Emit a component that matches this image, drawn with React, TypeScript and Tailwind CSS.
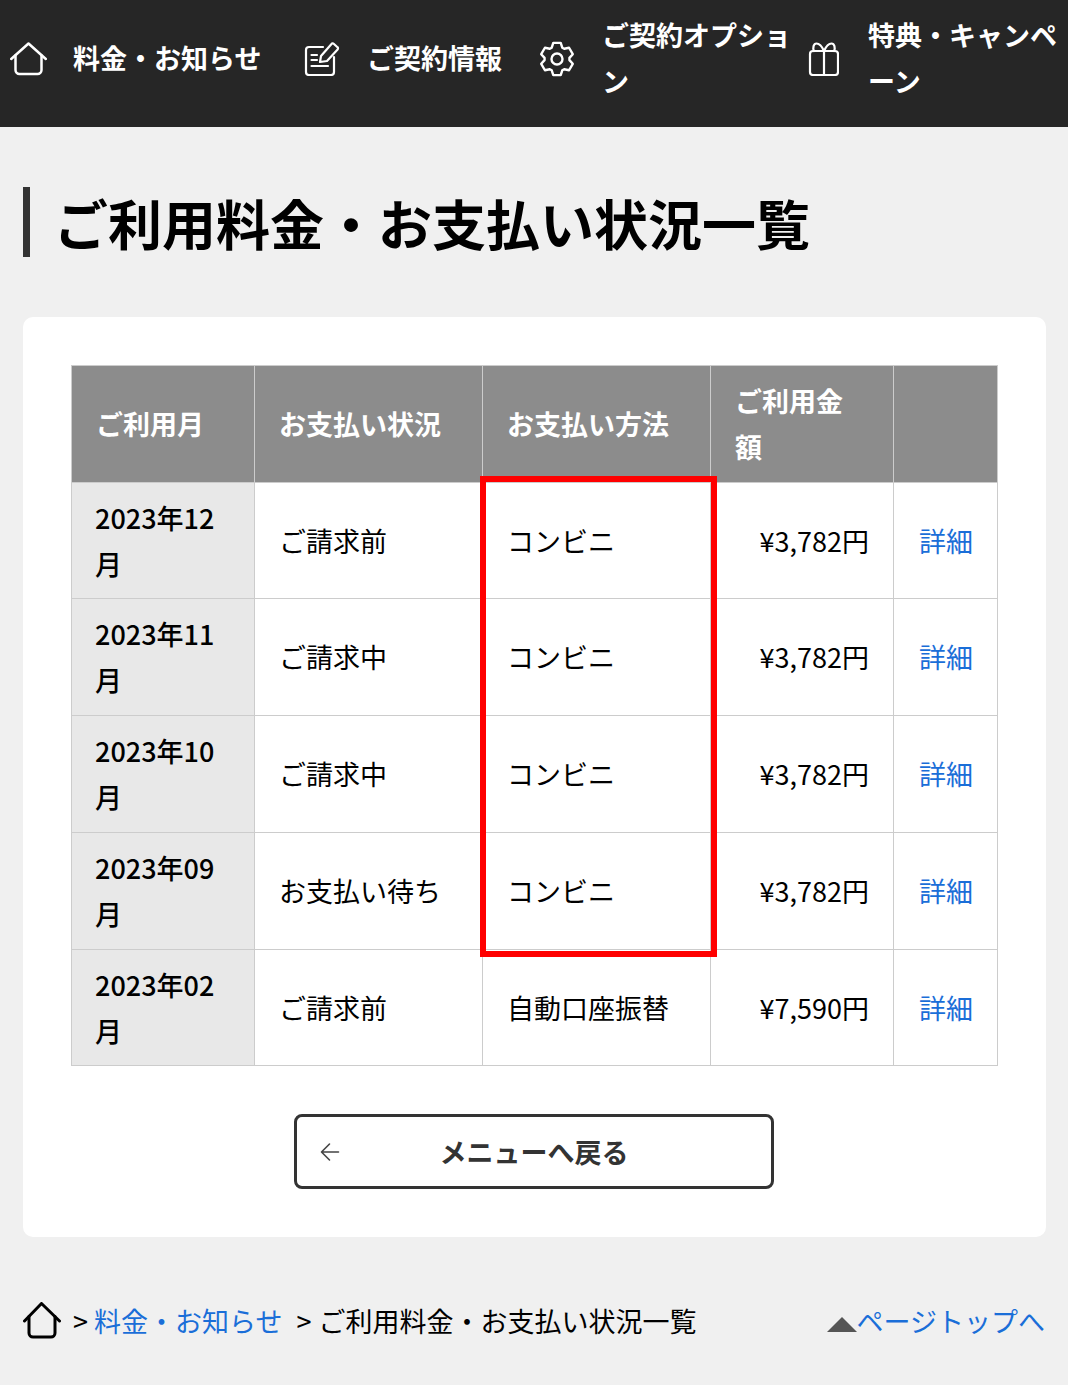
const font = { fontFamily: '"Noto Sans CJK JP", "Noto Sans", sans-serif' };

const rows = [
  ["2023年12月", "ご請求前", "コンビニ", "¥3,782円", "h-[116px]"],
  ["2023年11月", "ご請求中", "コンビニ", "¥3,782円", "h-[117px]"],
  ["2023年10月", "ご請求中", "コンビニ", "¥3,782円", "h-[117px]"],
  ["2023年09月", "お支払い待ち", "コンビニ", "¥3,782円", "h-[117px]"],
  ["2023年02月", "ご請求前", "自動口座振替", "¥7,590円", "h-[116px]"],
];

function HomeIcon() {
  return (
    <svg viewBox="0 0 37 34" className="w-[37px] h-[34px] shrink-0" fill="none" stroke="white" strokeWidth="2.5" strokeLinecap="round" strokeLinejoin="round">
      <path d="M1.200 17 18.500 1.500 35.800 17" />
      <path d="M5.500 13.500V28a4 4 0 0 0 4 4h18a4 4 0 0 0 4-4V13.500" />
    </svg>
  );
}

function EditIcon() {
  return (
    <svg viewBox="0 0 36 34" className="w-[36px] h-[34px] shrink-0" fill="none" stroke="white" strokeWidth="2.200" strokeLinecap="round" strokeLinejoin="round">
      <path d="M19 5H5a3 3 0 0 0-3 3v22a3 3 0 0 0 3 3h22a3 3 0 0 0 3-3V15" />
      <path d="M7.500 13H13M7.500 18H13M7.500 24H24" />
      <path d="M16 20l1-6L27.500 2a1.500 1.500 0 0 1 2.200-.2l3.800 3.400a1.500 1.500 0 0 1 .1 2.200L23 19z" />
    </svg>
  );
}

function GearIcon() {
  const pts: string[] = [];
  for (let i = 0; i < 6; i++) {
    const a = i * 60 - 90;
    [
      [a - 25, 12.5],
      [a - 13, 16.5],
      [a + 13, 16.5],
      [a + 25, 12.5],
    ].forEach(([d, r]) => {
      const t = (d * Math.PI) / 180;
      pts.push(`${(18 + r * Math.cos(t)).toFixed(2)},${(18 + r * Math.sin(t)).toFixed(2)}`);
    });
  }
  return (
    <svg viewBox="0 0 36 36" className="w-[36px] h-[36px] shrink-0" fill="none" stroke="white" strokeWidth="2.400" strokeLinecap="round" strokeLinejoin="round">
      <polygon points={pts.join(" ")} />
      <circle cx="18" cy="18" r="5.500" />
    </svg>
  );
}

function GiftIcon() {
  return (
    <svg viewBox="0 0 31 34" className="w-[31px] h-[34px] shrink-0" fill="none" stroke="white" strokeWidth="2.200" strokeLinecap="round" strokeLinejoin="round">
      <rect x="2" y="9" width="28" height="24" rx="3" />
      <path d="M16 9v24" />
      <path d="M16 9C14 4.500 11 1.500 8.500 1.500 5.500 1.500 4.500 6 6 9" />
      <path d="M16 9c2-4.500 5-7.500 7.500-7.500 3 0 4 4.500 2.500 7.500" />
    </svg>
  );
}

function NavText({ className, children }: { className: string; children: string }) {
  return <span className={`text-[27px] font-bold leading-[46px] text-white -mt-[2px] ${className}`}>{children}</span>;
}

export default function App() {
  return (
    <div style={font} className="w-[1068px] h-[1385px] bg-[#f0f0f0] text-black overflow-hidden">
      <nav className="h-[127px] bg-[#262626] flex items-center pl-[10px] pb-[10px]">
        <HomeIcon />
        <NavText className="ml-[26px] w-[190px] shrink-0">料金・お知らせ</NavText>
        <span className="ml-[41px]"><EditIcon /></span>
        <NavText className="ml-[27px] w-[136px] shrink-0">ご契約情報</NavText>
        <span className="ml-[36px]"><GearIcon /></span>
        <NavText className="ml-[27px] w-[190px] shrink-0">ご契約オプション</NavText>
        <span className="ml-[16px]"><GiftIcon /></span>
        <NavText className="ml-[29px] w-[195px] shrink-0">特典・キャンペーン</NavText>
      </nav>

      <div className="px-[23px]">
        <h1 className="mt-[60px] h-[70px] border-l-[7px] border-[#333] pl-[24px] text-[54px] leading-[72px] font-bold whitespace-nowrap">
          ご利用料金・お支払い状況一覧
        </h1>

        <main className="mt-[60px] h-[920px] w-[1023px] bg-white rounded-[10px] px-[48px] pt-[48px]">
          <div className="relative">
            <table className="w-[926px] table-fixed border-collapse text-[27px] leading-[46px]">
              <colgroup>
                <col className="w-[183px]" />
                <col className="w-[228px]" />
                <col className="w-[228px]" />
                <col className="w-[183px]" />
                <col className="w-[104px]" />
              </colgroup>
              <thead>
                <tr className="h-[117px] bg-[#8c8c8c] text-white font-bold text-left">
                  {["ご利用月", "お支払い状況", "お支払い方法", "ご利用金額", ""].map((h, i) => (
                    <th key={i} className="border border-[#cccccc] px-[24px] font-bold">{h}</th>
                  ))}
                </tr>
              </thead>
              <tbody>
                {rows.map((r) => (
                  <tr key={r[0]} className={r[4]}>
                    <td className="border border-[#cccccc] bg-[#e8e8e8] px-[23px] font-medium">{r[0]}</td>
                    <td className="border border-[#cccccc] px-[24px]">{r[1]}</td>
                    <td className="border border-[#cccccc] px-[24px]">{r[2]}</td>
                    <td className="border border-[#cccccc] pl-[23px] pr-[24px] text-right">{r[3]}</td>
                    <td className="border border-[#cccccc] px-[25px] whitespace-nowrap text-[#1a6ed8]">詳細</td>
                  </tr>
                ))}
              </tbody>
            </table>
            <div className="absolute left-[409px] top-[111px] w-[237px] h-[481px] border-[6px] border-[#ff0000]" />
          </div>

          <button className="relative mt-[48px] ml-[223px] flex items-center justify-center w-[480px] h-[75px] border-[3px] border-[#333] rounded-[8px] text-[27px] font-bold text-[#333]">
            <svg viewBox="0 0 20 20" className="absolute left-[23px] top-[25px] w-[20px] h-[20px]" fill="none" stroke="#444" strokeWidth="1.600" strokeLinecap="round" strokeLinejoin="round">
              <path d="M18.500 10H2M9.500 2 1.500 10l8 8" />
            </svg>
            <span className="mt-[1px]">メニューへ戻る</span>
          </button>
        </main>

        <footer className="mt-[60px] flex items-center h-[48px] text-[27px] leading-[46px]">
          <svg viewBox="0 0 38 38" className="w-[38px] h-[38px] shrink-0" fill="none" stroke="#000" strokeWidth="3" strokeLinecap="round" strokeLinejoin="round">
            <path d="M1.500 19 18.500 1.500 36.500 19" />
            <path d="M6 14.500V31a4 4 0 0 0 4 4h18a4 4 0 0 0 4-4V14.500" />
          </svg>
          <span className="ml-[12px]">&gt;</span>
          <span className="ml-[6px] text-[#1a6ed8]">料金・お知らせ</span>
          <span className="ml-[14px]">&gt;</span>
          <span className="ml-[7px] whitespace-nowrap">ご利用料金・お支払い状況一覧</span>
          <span className="ml-auto flex items-center text-[#1a6ed8] whitespace-nowrap">
            <span className="w-0 h-0 mt-[6px] border-l-[15px] border-r-[15px] border-b-[15px] border-l-transparent border-r-transparent border-b-[#555]" />
            ページトップへ
          </span>
        </footer>
      </div>
    </div>
  );
}
